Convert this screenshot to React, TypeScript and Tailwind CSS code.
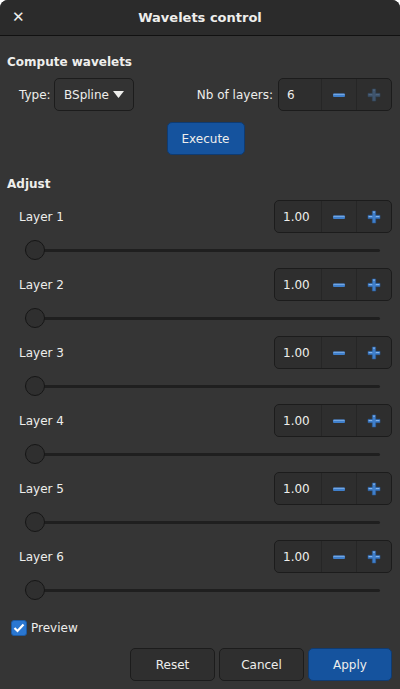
import React from 'react';

const layers = ['Layer 1', 'Layer 2', 'Layer 3', 'Layer 4', 'Layer 5', 'Layer 6'];

const MinusIcon: React.FC<{ dim?: boolean }> = ({ dim }) => (
    <svg width="14" height="14" viewBox="0 0 14 14">
        <rect x="1" y="5.5" width="12" height="3.5" rx="1" fill={dim ? '#3f546d' : '#3f7fcb'} />
        <rect x="1.5" y="5.8" width="11" height="1" fill={dim ? '#52667e' : '#7fb0e8'} />
    </svg>
);

const PlusIcon: React.FC<{ dim?: boolean }> = ({ dim }) => (
    <svg width="14" height="14" viewBox="0 0 14 14">
        <path
            d="M5.3 1h3.4v4.3H13v3.4H8.7V13H5.3V8.7H1V5.3h4.3z"
            fill={dim ? '#3f546d' : '#3f7fcb'}
            stroke={dim ? '#34465b' : '#2c5d98'}
            strokeWidth="0.6"
        />
        <rect x="6" y="1.6" width="2" height="1" fill={dim ? '#52667e' : '#8cbaf0'} />
        <rect x="1.6" y="6" width="3.6" height="0.9" fill={dim ? '#52667e' : '#8cbaf0'} />
        <rect x="8.8" y="6" width="3.6" height="0.9" fill={dim ? '#52667e' : '#8cbaf0'} />
    </svg>
);

const SpinBox: React.FC<{ value: string; entryWidth: string; plusDim?: boolean }> = ({ value, entryWidth, plusDim }) => (
    <div className="flex h-[33px] rounded-[5px] border border-[#1c1c1c] bg-[#2e2e2e] overflow-hidden">
        <div className={`${entryWidth} flex items-center pl-2 text-[12px]`}>{value}</div>
        <div className="w-[35px] flex items-center justify-center border-l border-[#262626]">
            <MinusIcon />
        </div>
        <div className="w-[35px] flex items-center justify-center border-l border-[#262626]">
            <PlusIcon dim={plusDim} />
        </div>
    </div>
);

const Slider: React.FC = () => (
    <div className="relative h-[20px] ml-[25px] mr-[12px] flex items-center">
        <div className="w-full h-[3px] rounded-full bg-[#1f1f1f]" />
        <div className="absolute left-0 top-0 w-[20px] h-[20px] rounded-full bg-[#2f2f2f] border border-[#161616]" />
    </div>
);

export default function App() {
    return (
        <div className="w-[400px] h-[689px] bg-[#353535] rounded-t-[8px] overflow-hidden text-[#eeeeec] font-['DejaVu_Sans',sans-serif] text-[12px]">
            {/* Header bar */}
            <div className="relative h-[36px] bg-[#2b2b2b] border-b border-[#111111] flex items-center justify-center">
                <span className="absolute left-[12px] top-[8px] text-[15px] font-bold leading-[18px]">✕</span>
                <span className="text-[13px] font-bold">Wavelets control</span>
            </div>

            {/* Compute wavelets */}
            <div className="pl-[7px] pr-[8px]">
                <div className="mt-[19px] font-bold text-[12px] leading-[15px]">Compute wavelets</div>
                <div className="mt-[8px] flex items-center h-[33px]">
                    <span className="ml-[12px] w-[35px]">Type:</span>
                    <div className="w-[80px] h-[33px] rounded-[5px] border border-[#1c1c1c] bg-[#333333] flex items-center justify-center gap-[4px]">
                        <span>BSpline</span>
                        <svg width="11" height="7" viewBox="0 0 11 7">
                            <path d="M0 0h11L5.5 7z" fill="#eeeeec" />
                        </svg>
                    </div>
                    <span className="ml-auto mr-[5px]">Nb of layers:</span>
                    <SpinBox value="6" entryWidth="w-[42px]" plusDim />
                </div>
                <div className="mt-[11px] flex justify-center">
                    <div className="ml-[12px] w-[78px] h-[33px] rounded-[5px] bg-[#15539e] border border-[#0f3b71] flex items-center justify-center">
                        Execute
                    </div>
                </div>

                {/* Adjust */}
                <div className="mt-[22px] font-bold leading-[15px]">Adjust</div>
                <div className="mt-[8px] flex flex-col">
                    {layers.map((name) => (
                        <div key={name} className="flex flex-col">
                            <div className="flex items-center h-[33px]">
                                <span className="ml-[12px]">{name}</span>
                                <div className="ml-auto">
                                    <SpinBox value="1.00" entryWidth="w-[46px]" />
                                </div>
                            </div>
                            <div className="mt-[7px] mb-[8px] -ml-[7px]">
                                <Slider />
                            </div>
                        </div>
                    ))}
                </div>

                {/* Preview */}
                <div className="mt-[11px] flex items-center gap-[4px] ml-[4px]">
                    <div className="w-[16px] h-[16px] rounded-[3px] bg-[#2a77d1] border border-[#1c5aa3] flex items-center justify-center">
                        <svg width="12" height="10" viewBox="0 0 12 10">
                            <path d="M1.5 5l3 3 6-6.5" fill="none" stroke="#ffffff" strokeWidth="2.2" />
                        </svg>
                    </div>
                    <span>Preview</span>
                </div>

                {/* Buttons */}
                <div className="mt-[11px] flex justify-end gap-[4px]">
                    <div className="w-[85px] h-[33px] rounded-[5px] border border-[#1c1c1c] bg-[#2f2f2f] flex items-center justify-center">
                        Reset
                    </div>
                    <div className="w-[85px] h-[33px] rounded-[5px] border border-[#1c1c1c] bg-[#2f2f2f] flex items-center justify-center">
                        Cancel
                    </div>
                    <div className="w-[84px] h-[33px] rounded-[5px] bg-[#15539e] border border-[#0f3b71] flex items-center justify-center">
                        Apply
                    </div>
                </div>
            </div>
        </div>
    );
}
